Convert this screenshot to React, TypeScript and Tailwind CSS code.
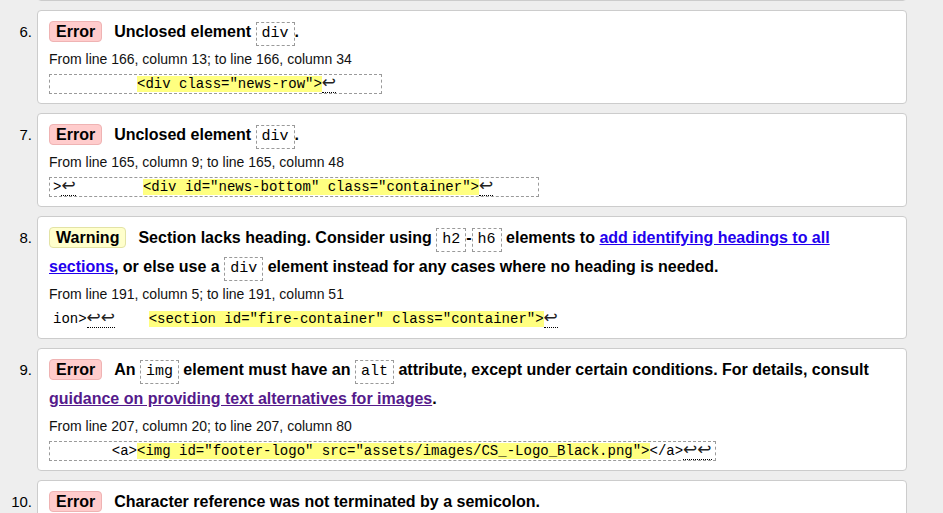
import type { ReactNode } from "react";

type Seg = { t: string; kind?: "hl" | "lb" };

type Message = {
  n: number;
  type: "Error" | "Warning";
  title: ReactNode;
  from: string;
  extract: Seg[];
  boxed?: boolean;
};

function Code({ children }: { children: ReactNode }) {
  return (
    <code className="inline-block border border-dashed border-[#9a9a9a] px-[5px] font-['Liberation_Mono',monospace] text-[15px] font-normal leading-[22px]">
      {children}
    </code>
  );
}

function Link({ children, visited }: { children: ReactNode; visited?: boolean }) {
  return (
    <a href="#" className={visited ? "text-[#551a8b] underline" : "text-[#2200ee] underline"}>
      {children}
    </a>
  );
}

const messages: Message[] = [
  {
    n: 6,
    type: "Error",
    title: (
      <>
        Unclosed element <Code>div</Code>.
      </>
    ),
    from: "From line 166, column 13; to line 166, column 34",
    extract: [
      { t: "          " },
      { t: '<div class="news-row">', kind: "hl" },
      { t: "↩", kind: "lb" },
      { t: "     " },
    ],
    boxed: true,
  },
  {
    n: 7,
    type: "Error",
    title: (
      <>
        Unclosed element <Code>div</Code>.
      </>
    ),
    from: "From line 165, column 9; to line 165, column 48",
    extract: [
      { t: ">" },
      { t: "↩", kind: "lb" },
      { t: "        " },
      { t: '<div id="news-bottom" class="container">', kind: "hl" },
      { t: "↩", kind: "lb" },
      { t: "     " },
    ],
    boxed: true,
  },
  {
    n: 8,
    type: "Warning",
    title: (
      <>
        Section lacks heading. Consider using <Code>h2</Code>-<Code>h6</Code> elements to{" "}
        <Link>add identifying headings to all sections</Link>, or else use a <Code>div</Code>{" "}
        element instead for any cases where no heading is needed.
      </>
    ),
    from: "From line 191, column 5; to line 191, column 51",
    extract: [
      { t: "ion>" },
      { t: "↩↩", kind: "lb" },
      { t: "    " },
      { t: '<section id="fire-container" class="container">', kind: "hl" },
      { t: "↩", kind: "lb" },
    ],
    boxed: false,
  },
  {
    n: 9,
    type: "Error",
    title: (
      <>
        An <Code>img</Code> element must have an <Code>alt</Code> attribute, except under
        certain conditions. For details, consult{" "}
        <Link visited>guidance on providing text alternatives for images</Link>.
      </>
    ),
    from: "From line 207, column 20; to line 207, column 80",
    extract: [
      { t: "       <a>" },
      { t: '<img id="footer-logo" src="assets/images/CS_-Logo_Black.png">', kind: "hl" },
      { t: "</a>" },
      { t: "↩↩", kind: "lb" },
    ],
    boxed: true,
  },
];

function Badge({ type }: { type: "Error" | "Warning" }) {
  const tone =
    type === "Error"
      ? "border-[#efb3b3] bg-[#ffcccc]"
      : "border-[#e3e3a6] bg-[#ffffcc]";
  return (
    <strong
      className={`mr-[12px] inline-block rounded-[4px] border px-[6px] leading-[19px] ${tone}`}
    >
      {type}
    </strong>
  );
}

function Extract({ segs, boxed }: { segs: Seg[]; boxed?: boolean }) {
  return (
    <div className="mt-[6px] flex text-[14px] leading-[18px]">
      <code
        className={`block whitespace-pre border border-dashed px-[3px] font-['Liberation_Mono',monospace] text-[14px] leading-[18px] text-black ${
          boxed ? "border-[#9a9a9a]" : "border-transparent"
        }`}
      >
        {segs.map((s, i) =>
          s.kind === "hl" ? (
            <mark key={i} className="bg-[#ffff80] text-black">
              {s.t}
            </mark>
          ) : s.kind === "lb" ? (
            <span
              key={i}
              className="border-b border-dotted border-black font-['DejaVu_Sans',sans-serif] text-[17px] leading-[14px] text-[#222]"
            >
              {s.t}
            </span>
          ) : (
            <span key={i}>{s.t}</span>
          )
        )}
      </code>
    </div>
  );
}

function MessageItem({ m }: { m: Message }) {
  return (
    <li className="flex">
      <span className="w-[37px] shrink-0 pr-[5px] pt-[7px] text-right text-[15px] leading-[29px]">
        {m.n}.
      </span>
      <div className="w-[870px] shrink-0 rounded-[4px] border border-[#cccccc] bg-white pb-[9px] pl-[11px] pr-[32px] pt-[6px]">
        <p className="text-[16px] font-bold leading-[29px] text-black">
          <Badge type={m.type} />
          {m.title}
        </p>
        <p className="mt-[4px] text-[14px] leading-[18px] text-[#111]">{m.from}</p>
        <Extract segs={m.extract} boxed={m.boxed} />
      </div>
    </li>
  );
}

export default function App() {
  return (
    <div className="h-[513px] overflow-hidden bg-[#eeeeee] font-['Liberation_Sans',Arial,sans-serif] text-black">
      <ol className="flex flex-col gap-[9px]">
        {/* tail of message 5, scrolled off above */}
        <li className="-mt-[21px] flex">
          <span className="w-[37px] shrink-0" />
          <div className="h-[22px] w-[870px] shrink-0 rounded-[4px] border border-[#cccccc] bg-white" />
        </li>
        {messages.map((m) => (
          <MessageItem key={m.n} m={m} />
        ))}
        <li className="flex">
          <span className="w-[37px] shrink-0 pr-[5px] pt-[7px] text-right text-[15px] leading-[29px]">
            10.
          </span>
          <div className="h-[120px] w-[870px] shrink-0 rounded-[4px] border border-[#cccccc] bg-white pl-[11px] pr-[32px] pt-[6px]">
            <p className="text-[16px] font-bold leading-[29px] text-black">
              <Badge type="Error" />
              Character reference was not terminated by a semicolon.
            </p>
          </div>
        </li>
      </ol>
    </div>
  );
}
